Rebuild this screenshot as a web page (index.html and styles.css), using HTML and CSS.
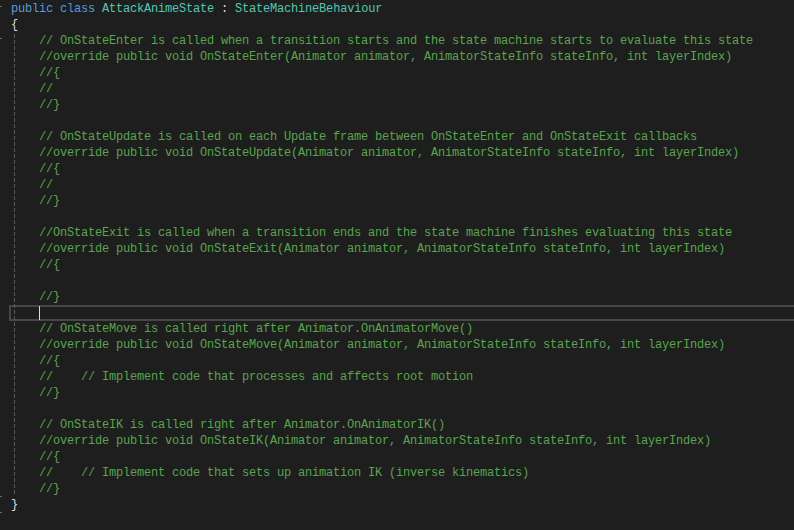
FILE: index.html
```html
<!DOCTYPE html>
<html>
<head>
<meta charset="utf-8">
<link rel="stylesheet" href="styles.css">
</head>
<body>
<div class="editor">
  <div class="tick t1"></div>
  <div class="tick t2"></div>
  <div class="tick t3"></div>
  <div class="tick t4"></div>
  <div class="guide"></div>
  <div class="code">
    <div class="ln"><span class="kw">public</span> <span class="kw">class</span> <span class="ty">AttackAnimeState</span> : <span class="ty">StateMachineBehaviour</span></div>
    <div class="ln">{</div>
    <div class="ln in c">// OnStateEnter is called when a transition starts and the state machine starts to evaluate this state</div>
    <div class="ln in c">//override public void OnStateEnter(Animator animator, AnimatorStateInfo stateInfo, int layerIndex)</div>
    <div class="ln in c">//{</div>
    <div class="ln in c">//</div>
    <div class="ln in c">//}</div>
    <div class="ln"></div>
    <div class="ln in c">// OnStateUpdate is called on each Update frame between OnStateEnter and OnStateExit callbacks</div>
    <div class="ln in c">//override public void OnStateUpdate(Animator animator, AnimatorStateInfo stateInfo, int layerIndex)</div>
    <div class="ln in c">//{</div>
    <div class="ln in c">//</div>
    <div class="ln in c">//}</div>
    <div class="ln"></div>
    <div class="ln in c">//OnStateExit is called when a transition ends and the state machine finishes evaluating this state</div>
    <div class="ln in c">//override public void OnStateExit(Animator animator, AnimatorStateInfo stateInfo, int layerIndex)</div>
    <div class="ln in c">//{</div>
    <div class="ln"></div>
    <div class="ln in c">//}</div>
    <div class="ln cur"><span class="caret"></span></div>
    <div class="ln in c">// OnStateMove is called right after Animator.OnAnimatorMove()</div>
    <div class="ln in c">//override public void OnStateMove(Animator animator, AnimatorStateInfo stateInfo, int layerIndex)</div>
    <div class="ln in c">//{</div>
    <div class="ln in c">//    // Implement code that processes and affects root motion</div>
    <div class="ln in c">//}</div>
    <div class="ln"></div>
    <div class="ln in c">// OnStateIK is called right after Animator.OnAnimatorIK()</div>
    <div class="ln in c">//override public void OnStateIK(Animator animator, AnimatorStateInfo stateInfo, int layerIndex)</div>
    <div class="ln in c">//{</div>
    <div class="ln in c">//    // Implement code that sets up animation IK (inverse kinematics)</div>
    <div class="ln in c">//}</div>
    <div class="ln">}</div>
  </div>
</div>
</body>
</html>
```
FILE: styles.css
```css
html, body {
  margin: 0;
  padding: 0;
  background: #1e1e1e;
}
.editor {
  position: relative;
  width: 794px;
  height: 530px;
  overflow: hidden;
  background: #1e1e1e;
}
.code {
  padding-left: 11px;
  font-family: "Liberation Mono", "DejaVu Sans Mono", monospace;
  font-size: 12px;
  letter-spacing: -0.2px;
  color: #dcdcdc;
}
.ln {
  height: 16px;
  line-height: 19px;
  white-space: pre;
}
.in {
  padding-left: 28px;
}
.c {
  color: #57a64a;
}
.kw {
  color: #569cd6;
}
.ty {
  color: #4ec9b0;
}
.cur {
  margin-left: -2px;
  border: 2px solid #464646;
  border-right: none;
  height: 12px;
  margin-top: 1px;
  margin-bottom: -1px;
  display: flex;
  align-items: stretch;
}
.caret {
  margin-left: 28px;
  width: 1px;
  background: #dcdcdc;
  margin-top: -1px;
  margin-bottom: -1px;
}
.guide {
  position: absolute;
  left: 14px;
  top: 34px;
  height: 462px;
  width: 1px;
  background: repeating-linear-gradient(to bottom, #5a5a5a 0, #5a5a5a 4px, transparent 4px, transparent 6px);
}
.tick {
  position: absolute;
  left: 0;
  width: 2px;
  height: 1px;
  background: #6e6e6e;
}
.t1 { top: 6px; }
.t2 { top: 38px; }
.t3 { top: 496px; }
.t4 { top: 512px; }
```
